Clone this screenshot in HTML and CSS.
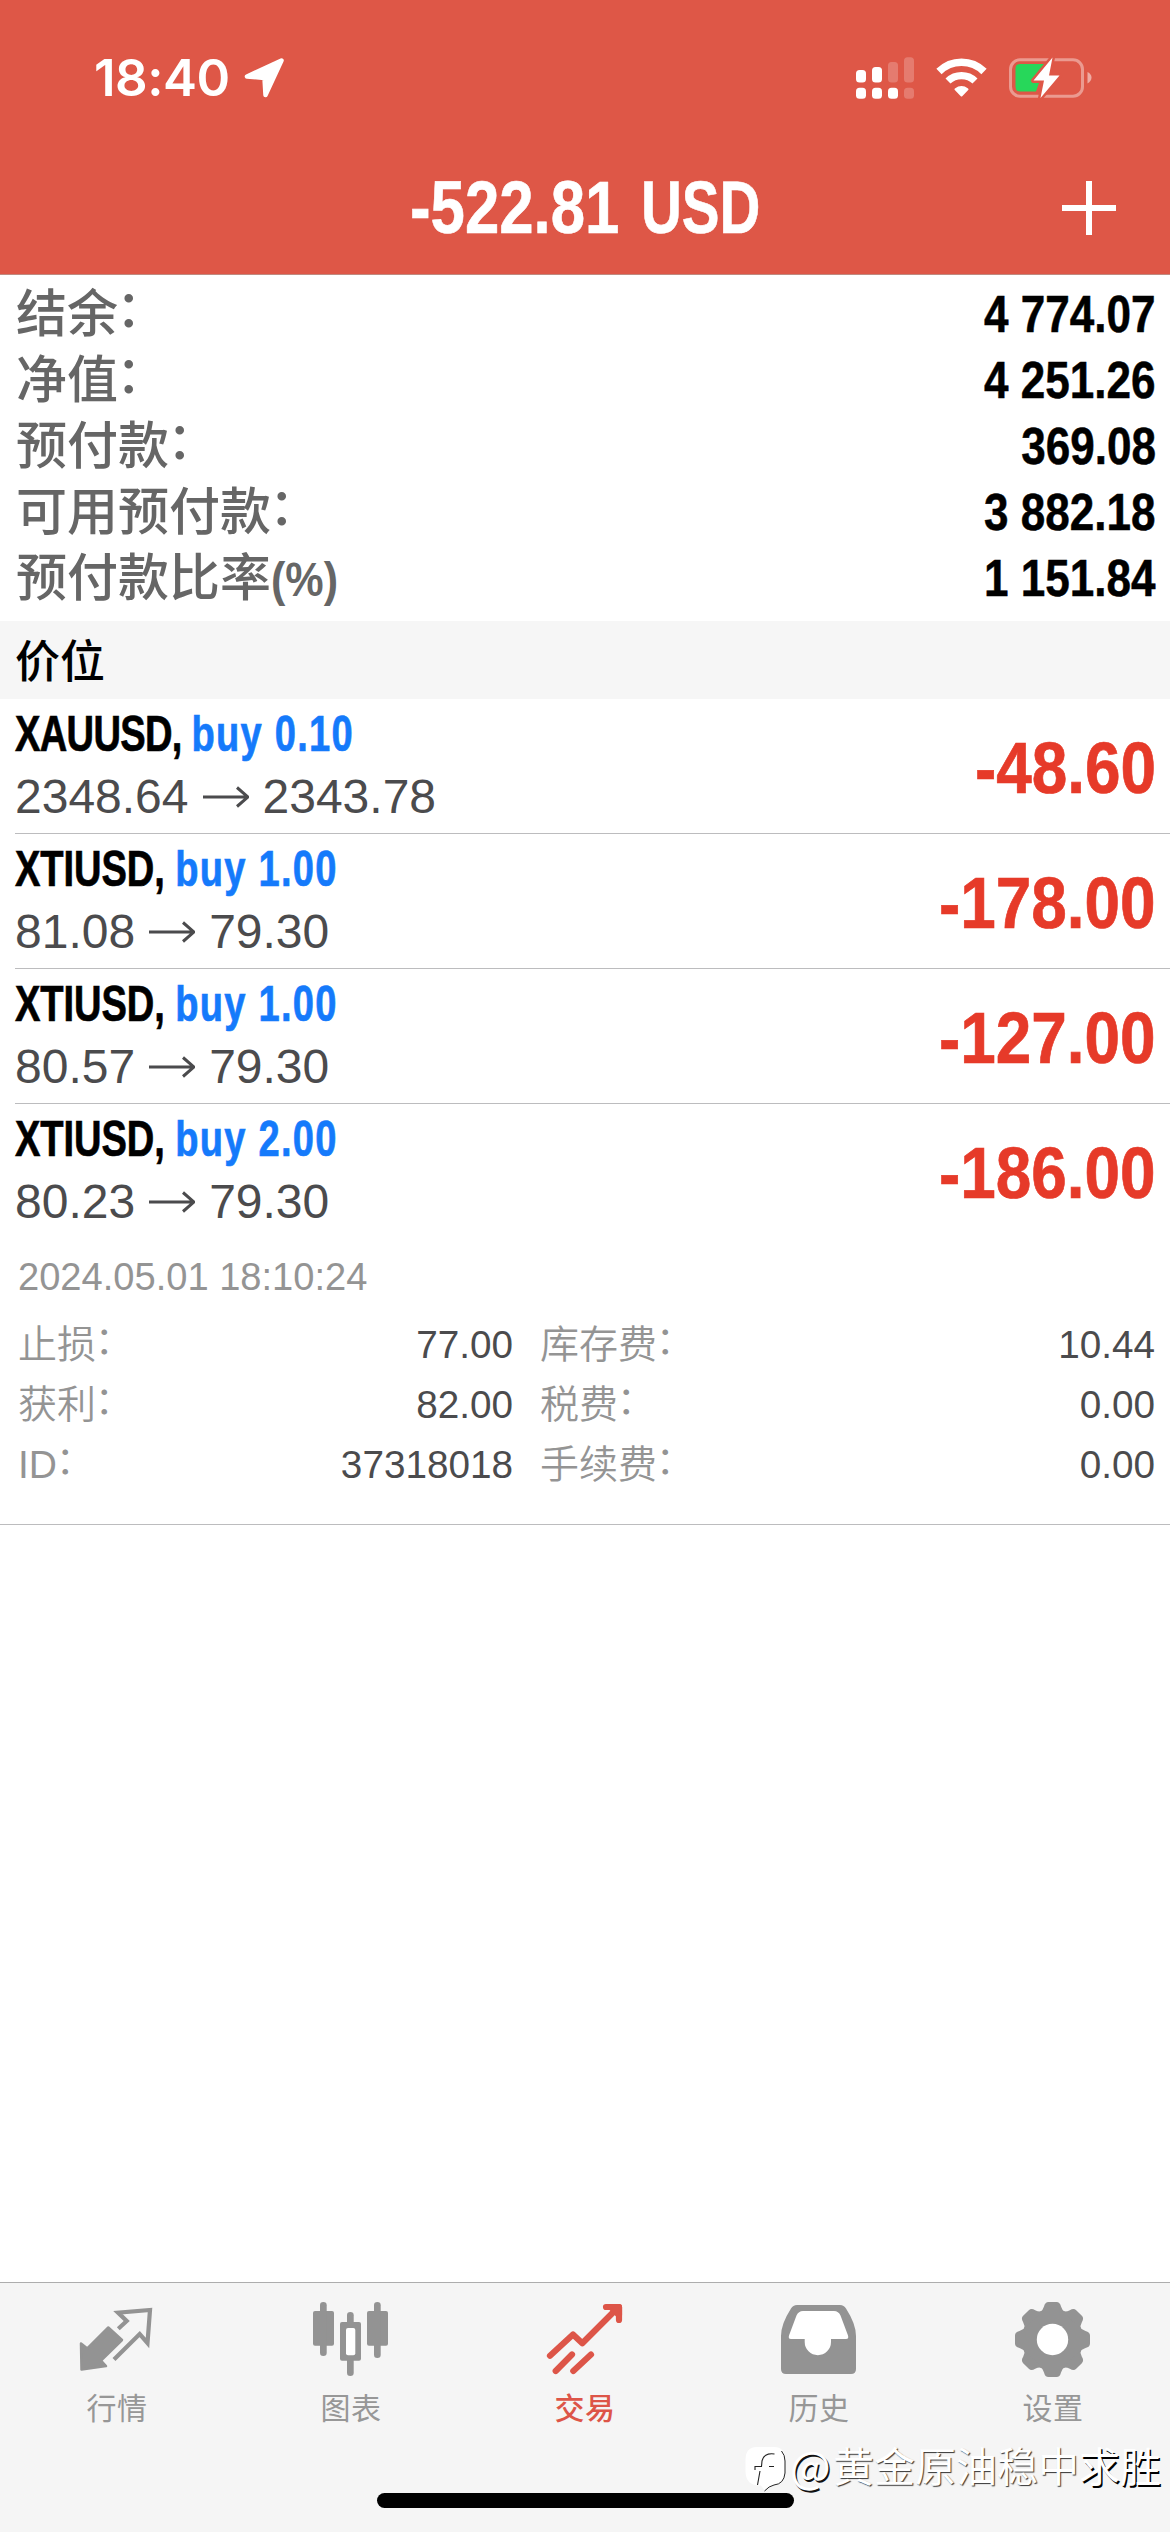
FILE: index.html
```html
<!DOCTYPE html>
<html lang="zh-CN">
<head>
<meta charset="utf-8">
<title>交易</title>
<link rel="stylesheet" href="styles.css">
</head>
<body>
<div class="screen">
  <header class="header">
    <div class="status">
      <div class="status-left">
        <span class="time">18:40</span>
        <svg class="location" width="40" height="40" viewBox="0 0 40 40"><path d="M37.5 2.500 L3 18.500 L20.500 20 L21.500 37 Z" fill="#fff" stroke="#fff" stroke-width="4.500" stroke-linejoin="round"/></svg>
      </div>
      <div class="status-right">
        <svg width="58" height="44" viewBox="0 0 58 44" fill="#fff">
          <rect x="0" y="14" width="10" height="12.500" rx="3.500"/><rect x="16" y="11" width="10" height="15.500" rx="3.500"/>
          <rect x="32" y="6" width="10" height="20.500" rx="3.500" opacity=".22"/><rect x="48" y="1.300" width="10" height="25.200" rx="3.500" opacity=".22"/>
          <rect x="0" y="31.700" width="10" height="11" rx="3.500"/><rect x="16" y="31.700" width="10" height="11" rx="3.500"/><rect x="32" y="31.700" width="10" height="11" rx="3.500"/>
          <rect x="48" y="31.700" width="10" height="11" rx="3.500" opacity=".22"/>
        </svg>
        <svg width="51" height="44" viewBox="0 0 51 44" fill="none" stroke="#fff">
          <path d="M3 15.500 A32 32 0 0 1 48 15.500" stroke-width="7.500"/>
          <path d="M12 25 A19.500 19.500 0 0 1 39 25" stroke-width="7.200"/>
          <path d="M25.500 39.500 L19.500 33.300 Q25.500 28.800 31.500 33.300 Z" fill="#fff" stroke-width="2" stroke-linejoin="round"/>
        </svg>
        <svg width="83" height="44" viewBox="0 0 83 44">
          <rect x="1.500" y="3.800" width="72" height="36.400" rx="9.500" fill="none" stroke="#fff" stroke-opacity=".4" stroke-width="3"/>
          <path d="M78.500 16 Q82.500 18 82.500 21.500 T78.500 27.500 Z" fill="#fff" fill-opacity=".5"/>
          <path d="M11 8 H36 L23 24 H31 L27 35.500 H11 Q6.500 35.500 6.500 31 V12.500 Q6.500 8 11 8 Z" fill="#27d75a"/>
          <path d="M43.500 1.500 L24.500 24.500 H35 L31.500 42 L50.500 19.500 H40 Z" fill="#fff" stroke="#de5747" stroke-width="5" paint-order="stroke" stroke-linejoin="round"/>
        </svg>
      </div>
    </div>
    <div class="nav">
      <h1 class="title"><span class="amount">-522.81</span> <span class="currency">USD</span></h1>
      <svg class="plus" width="54" height="54" viewBox="0 0 54 54"><path d="M0 27 H54 M27 0 V54" stroke="#fff" stroke-width="6"/></svg>
    </div>
  </header>

  <dl class="summary">
    <div class="sum-row"><dt>结余<i>：</i></dt><dd>4 774.07</dd></div>
    <div class="sum-row"><dt>净值<i>：</i></dt><dd>4 251.26</dd></div>
    <div class="sum-row"><dt>预付款<i>：</i></dt><dd>369.08</dd></div>
    <div class="sum-row"><dt>可用预付款<i>：</i></dt><dd>3 882.18</dd></div>
    <div class="sum-row"><dt>预付款比率<span class="pct">(%)</span></dt><dd>1 151.84</dd></div>
  </dl>

  <h2 class="section">价位</h2>

  <ul class="positions">
    <li class="position">
      <div class="info">
        <div class="deal"><span class="symbol gold">XAUUSD, </span><span class="side">buy 0.10</span></div>
        <div class="prices"><span>2348.64</span><svg class="arrow" viewBox="0 0 46 22"><path d="M0 11 H45 M34 1.500 L45 11 L34 20.500"/></svg><span>2343.78</span></div>
      </div>
      <span class="profit">-48.60</span>
    </li>
    <li class="position">
      <div class="info">
        <div class="deal"><span class="symbol">XTIUSD, </span><span class="side">buy 1.00</span></div>
        <div class="prices"><span>81.08</span><svg class="arrow" viewBox="0 0 46 22"><path d="M0 11 H45 M34 1.500 L45 11 L34 20.500"/></svg><span>79.30</span></div>
      </div>
      <span class="profit">-178.00</span>
    </li>
    <li class="position">
      <div class="info">
        <div class="deal"><span class="symbol">XTIUSD, </span><span class="side">buy 1.00</span></div>
        <div class="prices"><span>80.57</span><svg class="arrow" viewBox="0 0 46 22"><path d="M0 11 H45 M34 1.500 L45 11 L34 20.500"/></svg><span>79.30</span></div>
      </div>
      <span class="profit">-127.00</span>
    </li>
    <li class="position open">
      <div class="info">
        <div class="deal"><span class="symbol">XTIUSD, </span><span class="side">buy 2.00</span></div>
        <div class="prices"><span>80.23</span><svg class="arrow" viewBox="0 0 46 22"><path d="M0 11 H45 M34 1.500 L45 11 L34 20.500"/></svg><span>79.30</span></div>
      </div>
      <span class="profit">-186.00</span>
    </li>
  </ul>

  <section class="details">
    <div class="date">2024.05.01 18:10:24</div>
    <div class="grid">
      <div class="pair"><span>止损<i>：</i></span><b>77.00</b></div>
      <div class="pair"><span>库存费<i>：</i></span><b>10.44</b></div>
      <div class="pair"><span>获利<i>：</i></span><b>82.00</b></div>
      <div class="pair"><span>税费<i>：</i></span><b>0.00</b></div>
      <div class="pair"><span>ID<i>：</i></span><b>37318018</b></div>
      <div class="pair"><span>手续费<i>：</i></span><b>0.00</b></div>
    </div>
  </section>

  <nav class="tabs">
    <a class="tab">
      <svg width="80" height="80" viewBox="0 0 80 80">
        <path d="M4 43.500 L10.300 48.500 L31.300 27.500 L45 40 L24 60.700 L29 66 L4.500 69.500 Z" fill="#939393" stroke="#939393" stroke-width="2.500" stroke-linejoin="round"/>
        <path d="M41.300 28.700 L49.700 21 L41 12.600 L73 10 L70.500 43 L62.700 34 L37 59.500" fill="none" stroke="#939393" stroke-width="4.200"/>
      </svg>
      <span>行情</span>
    </a>
    <a class="tab">
      <svg width="80" height="80" viewBox="0 0 80 80" fill="#939393">
        <rect x="2" y="11" width="21" height="34.700" rx="2"/><rect x="9" y="2" width="6.700" height="54" rx="3.300"/>
        <rect x="36" y="12" width="6.700" height="64" rx="3.300"/><rect x="29" y="22" width="21" height="38.700" rx="2"/><rect x="35" y="28" width="9.300" height="27.300" rx="2" fill="#fff"/>
        <rect x="56" y="11" width="21" height="34.700" rx="2"/><rect x="63" y="2" width="6.700" height="56" rx="3.300"/>
      </svg>
      <span>图表</span>
    </a>
    <a class="tab active">
      <svg width="80" height="80" viewBox="0 0 80 80" fill="none" stroke="#dd5548" stroke-width="6.200" stroke-linecap="round" stroke-linejoin="round">
        <path d="M5 55.700 L28 34.500 L37.300 43.300 L73 7.500 M61 7 H74 V20"/>
        <path d="M10.700 71 L27 54.500 M28.300 71 L46 54.500"/>
        <path d="M66 7 H74 V15 Z" fill="#dd5548"/>
      </svg>
      <span>交易</span>
    </a>
    <a class="tab">
      <svg width="80" height="80" viewBox="0 0 80 80">
        <path d="M18 5 H61 Q65 5 67 8.500 Q77 24 77 36 V69 Q77 74 72 74 H7 Q2 74 2 69 V36 Q2 24 12 8.500 Q14 5 18 5 Z" fill="#939393"/>
        <path d="M24 11 H55 Q59.500 11 61.500 15.500 L69 35.500 Q70 39 67 39 H52 V42 A13 13 0 0 1 25.700 42 V39 H12 Q9 39 10 35.500 L17.500 15.500 Q19.500 11 24 11 Z" fill="#fff"/>
      </svg>
      <span>历史</span>
    </a>
    <a class="tab">
      <svg width="80" height="80" viewBox="0 0 80 80">
        <g transform="translate(39.500 39.500)" fill="#939393">
          <circle r="30.500"/>
          <g id="teeth">
            <path id="tooth" d="M-13 -27 Q-9.500 -29 -8.500 -33 Q-7.500 -37.500 -4 -37.500 H4 Q7.500 -37.500 8.500 -33 Q9.500 -29 13 -27 Z"/>
            <use href="#tooth" transform="rotate(45)"/><use href="#tooth" transform="rotate(90)"/><use href="#tooth" transform="rotate(135)"/>
            <use href="#tooth" transform="rotate(180)"/><use href="#tooth" transform="rotate(225)"/><use href="#tooth" transform="rotate(270)"/><use href="#tooth" transform="rotate(315)"/>
          </g>
          <circle r="15.700" fill="#fff"/>
        </g>
      </svg>
      <span>设置</span>
    </a>
    <div class="home-indicator"></div>
    <div class="watermark">
      <svg width="46" height="50" viewBox="0 0 46 50">
        <path d="M13 3 H30 Q41 3 41 15 V28 Q41 40 31 41 Q25 42 21 47 L17 41.500 Q2 42 1.500 28 V15 Q2 3 13 3 Z" fill="#fff"/>
        <path d="M37.500 7 Q41 11 41 17 V29 Q40 40 30 41 Q25 42 20.500 47" fill="none" stroke="#222" stroke-width="1"/>
        <path d="M30.500 10 Q20 8.500 18 17 L17.500 22.500 H11 V26 M25 22.500 H30 M16 27 L13.500 41" fill="none" stroke="#222" stroke-width="1.100"/>
      </svg>
      <span class="at">@</span><span>黄金原油稳中</span><span class="strong">求胜</span>
    </div>
  </nav>
</div>
</body>
</html>
```
FILE: styles.css
```css
* { box-sizing: border-box; margin: 0; padding: 0; }

body {
  width: 1170px;
  background: #fff;
  font-family: "Liberation Sans", "Noto Sans CJK SC", sans-serif;
}

.screen {
  display: flex;
  flex-direction: column;
  width: 1170px;
  height: 2532px;
  overflow: hidden;
}

svg { display: block; flex: none; }

/* Full-width colon, raised to the middle of the characters */
i {
  margin-left: -.04em;
  font-style: normal;
  line-height: 0;
  vertical-align: .1em;
}

/* Header */
.header {
  height: 275px;
  background: #de5747;
  border-bottom: 1px solid #c08a80;
  color: #fff;
}

.status {
  display: flex;
  justify-content: space-between;
  align-items: center;
  height: 156px;
  padding: 0 78px 0 94px;
}

.status-left, .status-right { display: flex; align-items: center; }
.status-left { gap: 12px; }
.status-right { gap: 22px; }

.time {
  width: 138px;
  font: 600 51px/60px Inter, sans-serif;
  letter-spacing: -0.5px;
  white-space: nowrap;
}

.nav {
  display: grid;
  grid-template-columns: 1fr auto 1fr;
  align-items: center;
  height: 104px;
  padding-right: 54px;
  padding-left: 54px;
}

.title {
  display: flex;
  gap: 22px;
  grid-column: 2;
  font-size: 73.500px;
  line-height: 104px;
  font-weight: 700;
  white-space: nowrap;
  -webkit-text-stroke: .6px;
}

.amount { width: 209px; transform: scaleX(.84); transform-origin: left; }
.currency { width: 120px; transform: scaleX(.77); transform-origin: left; }

.plus { justify-self: end; }

/* Account summary */
.summary {
  height: 346px;
  padding: 6px 14px 0 16px;
}

.sum-row {
  display: flex;
  justify-content: space-between;
  align-items: baseline;
  height: 66px;
  line-height: 66px;
  font-size: 51px;
}

.sum-row dt { padding-top: 1px; color: #666; font-weight: 500; white-space: nowrap; }

.sum-row dd {
  color: #000;
  font-weight: 700;
  transform: scaleX(.864);
  transform-origin: right;
  -webkit-text-stroke: .5px;
}

.pct {
  display: inline-block;
  font-size: 49px;
  font-weight: 700;
  transform: scaleX(.88);
  transform-origin: left;
}

.section {
  height: 78px;
  padding: 4px 0 0 15px;
  background: #f6f6f6;
  color: #000;
  font-size: 45px;
  font-weight: 500;
  line-height: 75px;
}

/* Open positions */
.positions { list-style: none; }

.position {
  display: flex;
  justify-content: space-between;
  height: 135px;
  margin-left: 15px;
  padding: 9px 14px 0 0;
  border-bottom: 1px solid #bcbcbe;
}

.position.open { border-bottom: 0; }

.deal {
  height: 50px;
  padding-top: 1px;
  font-size: 49.500px;
  line-height: 50px;
  font-weight: 700;
  white-space: pre;
  transform: scaleX(.77);
  transform-origin: left;
  -webkit-text-stroke: .7px;
}

.symbol { color: #000; letter-spacing: -.1px; }
.symbol.gold { letter-spacing: -.9px; }
.side { color: #157afb; letter-spacing: 1.600px; }

.prices {
  display: flex;
  align-items: center;
  gap: 14px;
  height: 64px;
  margin-top: 7px;
  color: #4b4b4d;
  font-size: 48px;
  line-height: 64px;
}

.arrow {
  width: 46px;
  height: 22px;
  fill: none;
  stroke: #4b4b4d;
  stroke-width: 3px;
}

.profit {
  color: #e63a29;
  font-size: 73px;
  line-height: 120px;
  font-weight: 700;
  transform: scaleX(.875);
  transform-origin: right;
  -webkit-text-stroke: .7px;
}

/* Expanded position */
.details {
  height: 286px;
  padding: 8px 15px 0 18px;
  border-bottom: 1px solid #bcbcbe;
  color: #949494;
}

.date {
  height: 60px;
  font-size: 38.100px;
  line-height: 60px;
}

.grid {
  display: grid;
  grid-template-columns: 495px 1fr;
  column-gap: 27px;
  margin-top: 8px;
}

.pair {
  display: flex;
  justify-content: space-between;
  align-items: baseline;
  height: 60px;
  font-size: 39px;
  font-weight: 350;
  line-height: 60px;
}

.pair b { color: #4b4b4d; font-size: 38.700px; font-weight: 400; }

/* Tab bar */
.tabs {
  position: relative;
  display: grid;
  grid-template-columns: repeat(5, 234px);
  align-content: start;
  height: 250px;
  margin-top: auto;
  padding-top: 17px;
  background: #f5f5f5;
  border-top: 1px solid #adadad;
}

.tab {
  display: flex;
  flex-direction: column;
  align-items: center;
  color: #979797;
  font-size: 30px;
  line-height: 40px;
  letter-spacing: .6px;
}

.tab span { margin-top: 9px; }
.active { color: #dd5548; font-weight: 500; }

.home-indicator {
  position: absolute;
  left: 377px;
  top: 210px;
  width: 417px;
  height: 15px;
  border-radius: 8px;
  background: #000;
}

.watermark {
  position: absolute;
  left: 744px;
  top: 161px;
  display: flex;
  height: 50px;
  color: #fff;
  font-size: 41px;
  line-height: 40px;
  font-family: "Noto Sans CJK SC", sans-serif;
  white-space: nowrap;
  text-shadow: 1px 1px 1px #333;
}

.watermark .at { width: 43px; font-size: 43px; text-shadow: 1.500px 1.500px 0 #111; }
.watermark .strong { text-shadow: 1.500px 1.500px 0 #000; }
```
